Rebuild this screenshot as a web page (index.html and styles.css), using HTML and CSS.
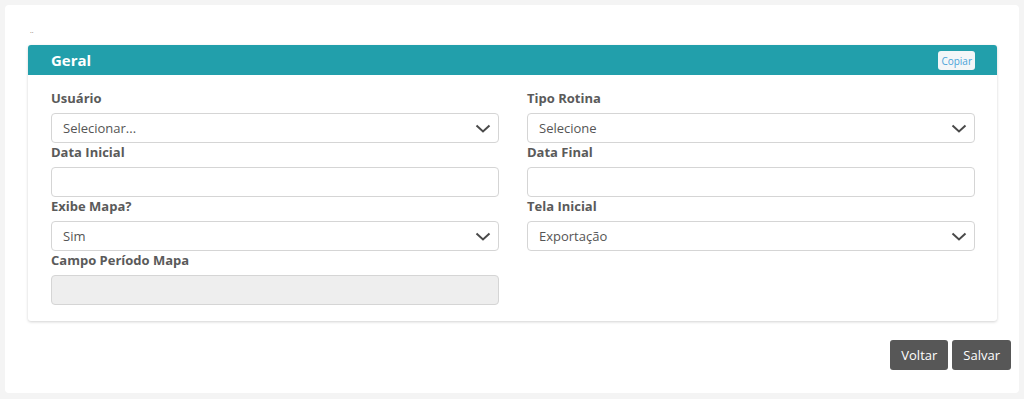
FILE: index.html
```html
<!DOCTYPE html>
<html lang="pt-BR">
<head>
    <meta charset="UTF-8">
    <title>Geral</title>
    <link rel="stylesheet" href="styles.css">
</head>
<body>
    <div class="page-card">
        <div class="crumb">..</div>

        <div class="panel">
            <div class="panel-heading">
                <span class="panel-title">Geral</span>
                <button class="btn-copy">Copiar</button>
            </div>
            <div class="panel-body">
                <div class="form-grid">
                    <div class="field">
                        <label>Usuário</label>
                        <div class="select">Selecionar...
                            <svg class="chevron" width="16" height="9" viewBox="0 0 16 9"><path d="M1.5 1.5 L8 7.5 L14.5 1.5" fill="none" stroke="#4a4a4a" stroke-width="2"/></svg>
                        </div>
                    </div>
                    <div class="field">
                        <label>Tipo Rotina</label>
                        <div class="select">Selecione
                            <svg class="chevron" width="16" height="9" viewBox="0 0 16 9"><path d="M1.5 1.5 L8 7.5 L14.5 1.5" fill="none" stroke="#4a4a4a" stroke-width="2"/></svg>
                        </div>
                    </div>
                    <div class="field">
                        <label>Data Inicial</label>
                        <div class="input"></div>
                    </div>
                    <div class="field">
                        <label>Data Final</label>
                        <div class="input"></div>
                    </div>
                    <div class="field">
                        <label>Exibe Mapa?</label>
                        <div class="select">Sim
                            <svg class="chevron" width="16" height="9" viewBox="0 0 16 9"><path d="M1.5 1.5 L8 7.5 L14.5 1.5" fill="none" stroke="#4a4a4a" stroke-width="2"/></svg>
                        </div>
                    </div>
                    <div class="field">
                        <label>Tela Inicial</label>
                        <div class="select">Exportação
                            <svg class="chevron" width="16" height="9" viewBox="0 0 16 9"><path d="M1.5 1.5 L8 7.5 L14.5 1.5" fill="none" stroke="#4a4a4a" stroke-width="2"/></svg>
                        </div>
                    </div>
                    <div class="field">
                        <label>Campo Período Mapa</label>
                        <div class="input disabled"></div>
                    </div>
                </div>
            </div>
        </div>

        <div class="actions">
            <button class="btn-dark">Voltar</button>
            <button class="btn-dark">Salvar</button>
        </div>
    </div>
</body>
</html>
```

FILE: styles.css
```css
* {
    box-sizing: border-box;
}
body {
    margin: 0;
    padding: 5px;
    background: #f4f4f4;
    font-family: "Open Sans", Arial, sans-serif;
    color: #555;
}
.page-card {
    background: #fff;
    border-radius: 4px;
    padding: 21px 13px 22px 23px;
    height: 388px;
    width: 1014px;
}
.crumb {
    font-size: 7px;
    color: #8a7a70;
    height: 19px;
    line-height: 10px;
    padding-left: 2px;
}
.panel {
    width: 969px;
    border-radius: 3px;
    box-shadow: 0 1px 3px rgba(0,0,0,0.18);
    background: #fff;
}
.panel-heading {
    background: #229fab;
    height: 30px;
    border-radius: 3px 3px 0 0;
    display: flex;
    align-items: center;
    justify-content: space-between;
    padding: 0 22px 0 23px;
}
.panel-title {
    color: #fff;
    font-weight: bold;
    font-size: 15px;
}
.btn-copy {
    font-family: "Open Sans", Arial, sans-serif;
    font-size: 10px;
    color: #4aa3d8;
    background: #f3f6f8;
    border: none;
    border-radius: 3px;
    padding: 2px 3px;
    height: 19px;
    margin-top: 1px;
}
.panel-body {
    padding: 15px 23px 16px 23px;
}
.form-grid {
    display: grid;
    grid-template-columns: 448px 448px;
    column-gap: 28px;
    row-gap: 1px;
}
.field label {
    display: block;
    font-size: 13px;
    font-weight: bold;
    color: #5a5a5a;
    height: 16px;
    line-height: 16px;
    margin-bottom: 7px;
}
.select, .input {
    height: 30px;
    border: 1px solid #d5d5d5;
    border-radius: 4px;
    font-size: 13px;
    color: #555;
    line-height: 28px;
    padding-left: 11px;
    position: relative;
}
.chevron {
    position: absolute;
    right: 7px;
    top: 10px;
}
.input.disabled {
    background: #eee;
}
.actions {
    display: flex;
    justify-content: flex-end;
    gap: 4px;
    margin-top: 19px;
    margin-right: -5px;
}
.btn-dark {
    font-family: "Open Sans", Arial, sans-serif;
    background: #575757;
    color: #fff;
    border: none;
    border-radius: 3px;
    height: 30px;
    padding: 0 11px;
    font-size: 13px;
}
```
